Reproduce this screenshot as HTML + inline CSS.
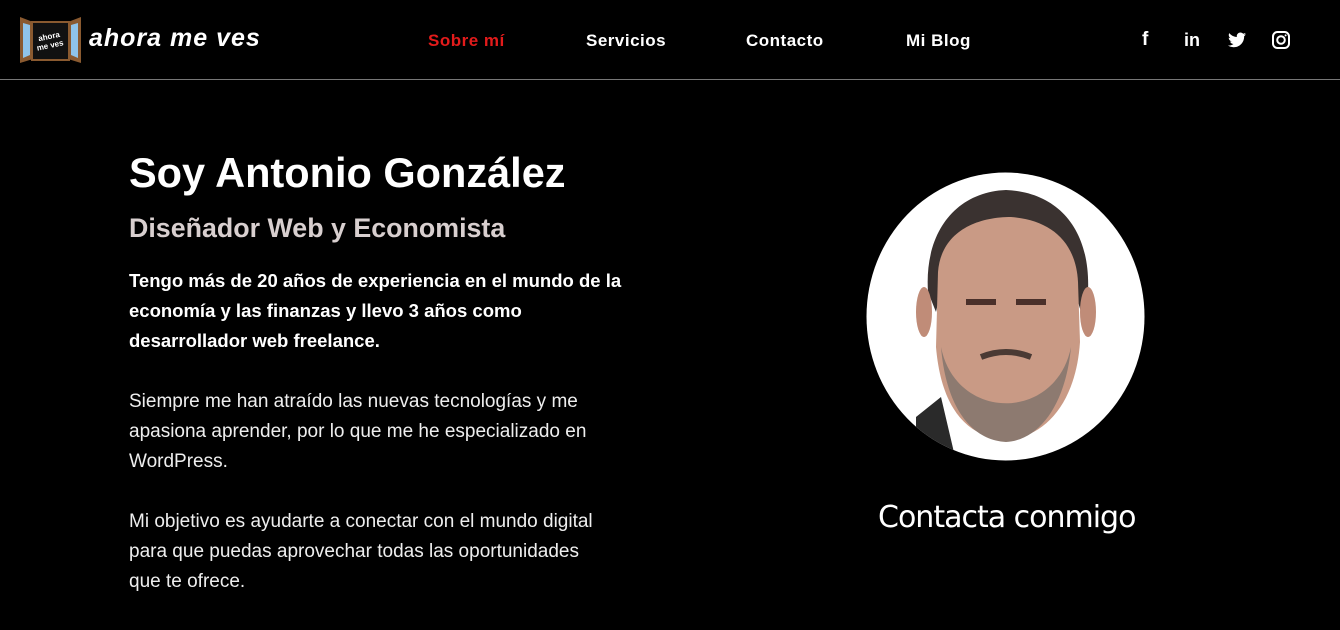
<!DOCTYPE html>
<html><head><meta charset="utf-8"><style>
body{margin:0;width:1340px;height:630px;background:#000;overflow:hidden;font-family:"Liberation Sans",sans-serif;color:#fff;position:relative}
.nav{position:absolute;top:0;left:0;width:1340px;height:79px;border-bottom:1px solid #777}
.nav a{position:absolute;top:31px;font-size:17px;font-weight:bold;color:#fff;letter-spacing:.5px}
.t{position:absolute;left:129px;white-space:nowrap}
</style></head><body>
<div class="nav">
<svg style="position:absolute;left:17px;top:15px" width="67" height="50" viewBox="0 0 67 50">
<path d="M3 2 L16 7 V44 L3 48Z" fill="#8a5a30"/><path d="M64 2 L51 7 V44 L64 48Z" fill="#8a5a30"/>
<path d="M6 8 L13 10 V40 L6 43Z" fill="#8fc4ea"/><path d="M61 8 L54 10 V40 L61 43Z" fill="#8fc4ea"/>
<rect x="15" y="7" width="37" height="38" fill="#111" stroke="#8a5a30" stroke-width="2"/>
<text x="33" y="24" font-size="8" fill="#fff" text-anchor="middle" font-weight="bold" transform="rotate(-12 33 26)">ahora</text>
<text x="33" y="33" font-size="8" fill="#fff" text-anchor="middle" font-weight="bold" transform="rotate(-12 33 30)">me ves</text></svg>
<div style="position:absolute;left:89px;top:24px;font-size:25px;font-weight:bold;font-style:italic;letter-spacing:1px">ahora me ves</div>
<a style="left:428px;color:#e21b1b">Sobre mí</a><a style="left:586px">Servicios</a><a style="left:746px">Contacto</a><a style="left:906px">Mi Blog</a>
<div style="position:absolute;left:1142px;top:29px;font-size:19px;font-weight:bold">f</div>
<div style="position:absolute;left:1184px;top:30px;font-size:18px;font-weight:bold">in</div>
<svg style="position:absolute;left:1228px;top:32px" width="18" height="16" viewBox="0 0 24 20"><path d="M24 2.4c-.9.4-1.8.7-2.8.8 1-.6 1.8-1.6 2.2-2.7-1 .6-2 1-3.1 1.2C19.300.7 18 0 16.6 0c-2.7 0-4.9 2.2-4.9 4.9 0 .4 0 .8.1 1.1C7.700 5.800 4.100 3.900 1.700.9c-.4.7-.7 1.6-.7 2.5 0 1.7.9 3.2 2.2 4.1-.8 0-1.600-.2-2.200-.6v.1c0 2.4 1.7 4.4 3.9 4.8-.4.1-.8.2-1.3.2-.3 0-.6 0-.9-.1.6 2 2.4 3.4 4.6 3.4-1.7 1.3-3.8 2.1-6.1 2.1H0c2.2 1.4 4.8 2.2 7.5 2.2 9.1 0 14-7.5 14-14v-.6c1-.7 1.8-1.6 2.5-2.6z" fill="#fff"/></svg>
<svg style="position:absolute;left:1272px;top:31px" width="18" height="18" viewBox="0 0 18 18"><rect x="1" y="1" width="16" height="16" rx="4.5" fill="none" stroke="#fff" stroke-width="2"/><circle cx="9" cy="9" r="3.8" fill="none" stroke="#fff" stroke-width="2"/><circle cx="13.6" cy="4.4" r="1" fill="#fff"/></svg>
</div>
<div class="t" style="top:149px;font-size:41.5px;font-weight:bold">Soy Antonio González</div>
<div class="t" style="top:213px;font-size:26.8px;font-weight:bold;color:#d8cfcf">Diseñador Web y Economista</div>
<div class="t" style="top:266px;font-size:18.5px;font-weight:bold;line-height:30px">Tengo más de 20 años de experiencia en el mundo de la<br>economía y las finanzas y llevo 3 años como<br>desarrollador web freelance.</div>
<div class="t" style="top:387px;font-size:19px;line-height:30px;color:#eee">Siempre me han atraído las nuevas tecnologías y me<br>apasiona aprender, por lo que me he especializado en<br>WordPress.</div>
<div class="t" style="top:507px;font-size:19px;line-height:30px;color:#eee">Mi objetivo es ayudarte a conectar con el mundo digital<br>para que puedas aprovechar todas las oportunidades<br>que te ofrece.</div>
<svg style="position:absolute;left:866px;top:172px" width="279" height="289" viewBox="0 0 279 289">
<defs><clipPath id="c"><ellipse cx="139.5" cy="144.5" rx="139" ry="144"/></clipPath></defs>
<ellipse cx="139.5" cy="144.5" rx="139" ry="144" fill="#fff"/>
<g clip-path="url(#c)">
<path d="M50 245 L75 225 L90 289 L50 289Z" fill="#2a2a2a"/>
<path d="M62 120 C58 60 90 20 140 18 C190 20 225 55 222 120 L215 140 L200 90 C180 70 100 70 80 95 L70 140Z" fill="#3a3230"/>
<path d="M72 100 C75 60 110 45 145 45 C185 48 210 70 212 110 L214 170 C210 230 180 265 140 268 C100 265 75 235 70 175 Z" fill="#c99a85"/>
<path d="M75 175 C90 250 190 250 205 175 C200 230 175 268 140 270 C105 268 80 235 75 175Z" fill="#8d7a70"/>
<path d="M100 130 h30 M150 130 h30" stroke="#4a302a" stroke-width="6"/>
<path d="M115 185 Q140 175 165 185" stroke="#4a3a34" stroke-width="6" fill="none"/>
<ellipse cx="58" cy="140" rx="8" ry="25" fill="#c08c78"/><ellipse cx="222" cy="140" rx="8" ry="25" fill="#c08c78"/>
</g></svg>
<div style="position:absolute;left:878px;top:500px;font-size:30px;font-family:'Comic Sans MS','DejaVu Sans',cursive;letter-spacing:-1px">Contacta conmigo</div>
</body></html>
